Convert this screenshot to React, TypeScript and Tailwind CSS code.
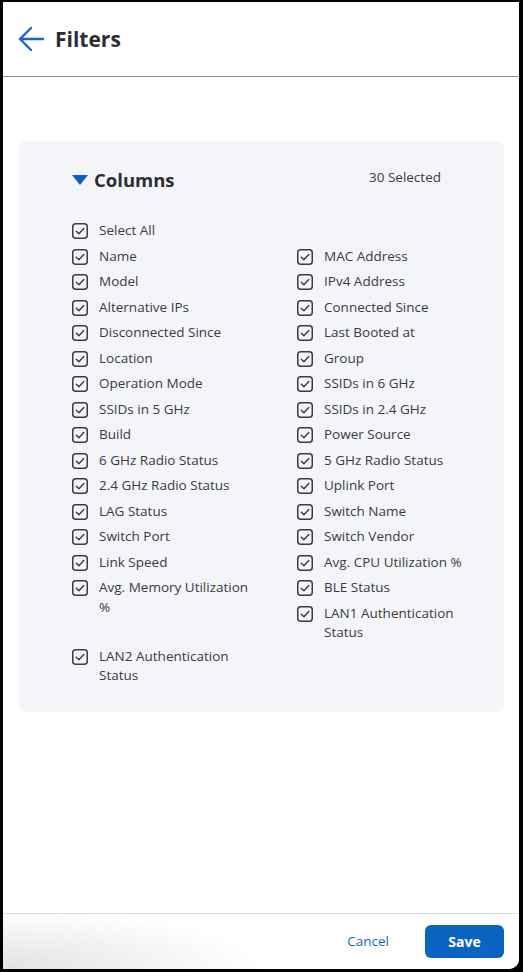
import React from 'react';

const columns: { label: string; span?: boolean }[] = [
  { label: 'Name' },
  { label: 'MAC Address' },
  { label: 'Model' },
  { label: 'IPv4 Address' },
  { label: 'Alternative IPs' },
  { label: 'Connected Since' },
  { label: 'Disconnected Since' },
  { label: 'Last Booted at' },
  { label: 'Location' },
  { label: 'Group' },
  { label: 'Operation Mode' },
  { label: 'SSIDs in 6 GHz' },
  { label: 'SSIDs in 5 GHz' },
  { label: 'SSIDs in 2.4 GHz' },
  { label: 'Build' },
  { label: 'Power Source' },
  { label: '6 GHz Radio Status' },
  { label: '5 GHz Radio Status' },
  { label: '2.4 GHz Radio Status' },
  { label: 'Uplink Port' },
  { label: 'LAG Status' },
  { label: 'Switch Name' },
  { label: 'Switch Port' },
  { label: 'Switch Vendor' },
  { label: 'Link Speed' },
  { label: 'Avg. CPU Utilization %' },
  { label: 'Avg. Memory Utilization %', span: true },
  { label: 'BLE Status' },
  { label: 'LAN1 Authentication Status' },
  { label: 'LAN2 Authentication Status' },
];

function CheckBox() {
  return (
    <svg width="16" height="16" viewBox="0 0 16 16" className="shrink-0 mt-[2px]">
      <rect x="0.75" y="0.75" width="14.5" height="14.5" rx="3" fill="none" stroke="#3a3a42" strokeWidth="1.5" />
      <path d="M4.3 8.2 L6.9 10.7 L11.8 5.4" fill="none" stroke="#3a3a42" strokeWidth="1.4" strokeLinecap="round" strokeLinejoin="round" />
    </svg>
  );
}

function Item({ label, className = '' }: { label: string; className?: string }) {
  return (
    <label className={`flex items-start gap-[11px] ${className}`}>
      <CheckBox />
      <span className="max-w-[156px] text-[13.5px] leading-[19.5px] text-[#3a3a44]">{label}</span>
    </label>
  );
}

export default function App() {
  return (
    <div className="w-[523px] h-[972px] bg-black pl-[3px] pt-[2px] pr-[4px] pb-[3px] font-['Open_Sans',sans-serif]">
      <div className="h-full bg-white rounded-br-[10px] flex flex-col overflow-hidden">
        {/* header */}
        <header className="h-[75px] shrink-0 flex items-center gap-[10px] pl-[15px] border-b border-[#8e8e94]">
          <svg width="27" height="26" viewBox="0 0 27 26">
            <path d="M25 13 H2 M13 2 L2 13 L13 24" fill="none" stroke="#1766c6" strokeWidth="2.4" strokeLinecap="round" strokeLinejoin="round" />
          </svg>
          <h1 className="text-[21px] font-bold text-[#2d2d37] leading-none">Filters</h1>
        </header>

        {/* body */}
        <main className="flex-1 pt-[64px] pl-[16px] pr-[15px]">
          <section className="bg-[#f4f5f9] rounded-[8px] pt-[25px] pb-[26px] pl-[53px] pr-[24px]">
            <div className="flex items-center justify-between mb-[27px]">
              <div className="flex items-center gap-[6px]">
                <svg width="16" height="10" viewBox="0 0 16 10">
                  <path d="M0 0 H16 L8 10 Z" fill="#0d5fc2" />
                </svg>
                <h2 className="text-[18.5px] leading-[28px] font-bold text-[#2d2d37]">Columns</h2>
              </div>
              <span className="mr-[39px] -mt-[6px] text-[13.5px] text-[#3a3a44]">30 Selected</span>
            </div>

            <div className="grid grid-cols-[225px_1fr] gap-y-[6px]">
              <Item label="Select All" className="col-span-2" />
              {columns.map(c => (
                <Item
                  key={c.label}
                  label={c.label}
                  className={c.span ? 'row-span-2' : c.label.startsWith('LAN2') ? '-mt-[2px]' : ''}
                />
              ))}
            </div>
          </section>
        </main>

        {/* footer */}
        <footer className="h-[56px] shrink-0 border-t border-[#dcdce0] flex items-center justify-end gap-[36px] pr-[15px] bg-[radial-gradient(ellipse_260px_60px_at_0%_100%,#e2e2e4,#ffffff)]">
          <button className="text-[13.5px] text-[#1766c6]">Cancel</button>
          <button className="w-[79px] h-[33px] rounded-[6px] bg-[#0b63c2] text-white text-[14px] font-bold">Save</button>
        </footer>
      </div>
    </div>
  );
}
